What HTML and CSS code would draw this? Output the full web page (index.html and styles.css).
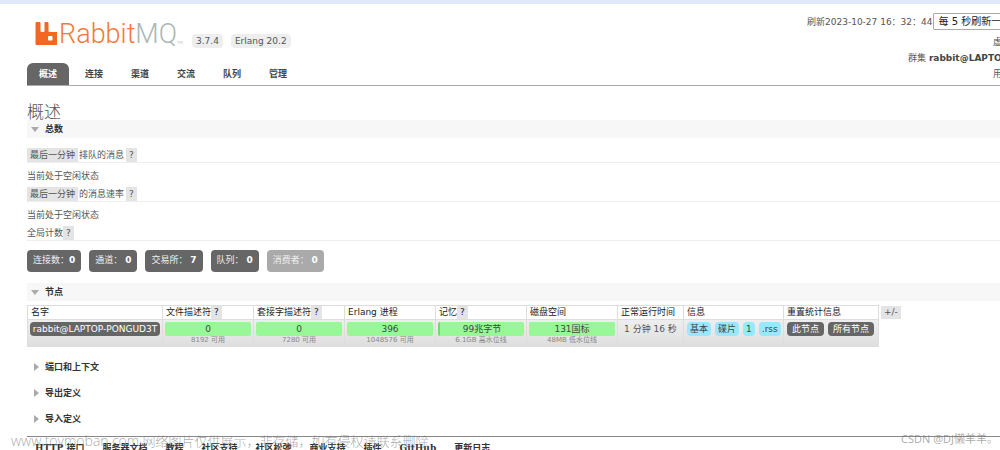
FILE: index.html
```html
<!DOCTYPE html>
<html lang="zh-CN">
<head>
<meta charset="utf-8">
<title>RabbitMQ Management</title>
<link rel="stylesheet" href="styles.css">
</head>
<body>
<header class="header">
  <div class="brand">
    <a class="logo" href="#" aria-label="RabbitMQ">
      <svg class="logo-mark" viewBox="0 0 21 23" aria-hidden="true"><path fill="#f26822" fill-rule="evenodd" d="M1 0h3q1 0 1 1v8q0 1 1 1h2q1 0 1-1V1q0-1 1-1h2q1 0 1 1v8q0 1 1 1h7q1 0 1 1v11q0 1-1 1H1q-1 0-1-1V1q0-1 1-1zM13.500 14q-1 0-1 1v2.500q0 1 1 1h2.500q1 0 1-1v-2.500q0-1-1-1z"/></svg>
      <span class="logo-text">Rabbit<span class="logo-mq">MQ</span></span><span class="logo-tm">TM</span>
    </a>
    <span class="version">3.7.4</span>
    <span class="version">Erlang 20.2</span>
  </div>
  <div class="status">
    <div class="status-row refresh"><label for="refresh">刷新2023-10-27 16：32：44</label><select id="refresh"><option>每 5 秒刷新一次</option></select></div>
    <div class="status-row vhost">虚拟主机</div>
    <div class="status-row cluster">群集 <b>rabbit@LAPTOP-PONGUD3T</b></div>
    <div class="status-row user">用户 guest</div>
  </div>
</header>
<nav class="tabs">
  <a class="tab active" href="#">概述</a><a class="tab" href="#">连接</a><a class="tab" href="#">渠道</a><a class="tab" href="#">交流</a><a class="tab" href="#">队列</a><a class="tab" href="#">管理</a>
</nav>
<main class="main">
  <h1>概述</h1>
  <h2 class="section open">总数</h2>
  <div class="totals">
    <h3><button class="range">最后一分钟</button>排队的消息<button class="help spaced">?</button></h3>
    <p>当前处于空闲状态</p>
    <h3><button class="range">最后一分钟</button>的消息速率<button class="help spaced">?</button></h3>
    <p>当前处于空闲状态</p>
    <h3>全局计数<button class="help">?</button></h3>
    <div class="counts">
      <a class="count" href="#">连接数：<b>0</b></a>
      <a class="count" href="#">通道： <b>0</b></a>
      <a class="count" href="#">交易所： <b>7</b></a>
      <a class="count" href="#">队列： <b>0</b></a>
      <span class="count disabled">消费者： <b>0</b></span>
    </div>
  </div>
  <h2 class="section open">节点</h2>
  <div class="nodes">
    <table>
      <colgroup><col class="c-name"><col class="c-stat"><col class="c-stat"><col class="c-stat"><col class="c-stat"><col class="c-stat"><col class="c-time"><col class="c-info"><col class="c-reset"></colgroup>
      <thead><tr>
        <th>名字</th><th>文件描述符<button class="help">?</button></th><th>套接字描述符<button class="help">?</button></th><th>Erlang 进程</th><th>记忆<button class="help">?</button></th><th>磁盘空间</th><th>正常运行时间</th><th>信息</th><th>重置统计信息</th>
      </tr></thead>
      <tbody><tr>
        <td><a class="pill node" href="#">rabbit@LAPTOP-PONGUD3T</a></td>
        <td><div class="bar">0</div><small>8192 可用</small></td>
        <td><div class="bar">0</div><small>7280 可用</small></td>
        <td><div class="bar">396</div><small>1048576 可用</small></td>
        <td><div class="bar used">99兆字节</div><small>6.1GB 高水位线</small></td>
        <td><div class="bar">131国标</div><small>48MB 低水位线</small></td>
        <td class="uptime">1 分钟 16 秒</td>
        <td><div class="group"><span class="pill info">基本</span><span class="pill info">碟片</span><span class="pill info">1</span><span class="pill info">.rss</span></div></td>
        <td><div class="group"><button class="pill">此节点</button><button class="pill">所有节点</button></div></td>
      </tr></tbody>
    </table>
    <button class="columns">+/-</button>
  </div>
  <div class="folded">
    <h2 class="section">端口和上下文</h2>
    <h2 class="section">导出定义</h2>
    <h2 class="section">导入定义</h2>
  </div>
</main>
<footer class="footer">
  <a href="#">HTTP 接口</a><a href="#">服务器文档</a><a href="#">教程</a><a href="#">社区支持</a><a href="#">社区松弛</a><a href="#">商业支持</a><a href="#">插件</a><a href="#">GitHub</a><a href="#">更新日志</a>
</footer>
<div class="watermark"><span class="site">www.toymoban.com</span> 网络图片仅供展示，非存储，如有侵权请联系删除</div>
<div class="credit">CSDN @DJ懒羊羊。</div>
</body>
</html>
```
FILE: styles.css
```css
* { box-sizing: border-box; }
body {
  position: relative;
  height: 100vh;
  margin: 0;
  overflow: hidden;
  border-top: 4px solid #dfe9f9;
  background: #fff;
  color: #555;
  font: 9px/12px "DejaVu Sans", "Noto Sans CJK SC", sans-serif;
}
button, select { margin: 0; border: 0; font: inherit; color: inherit; }
a { color: inherit; text-decoration: none; }

.header { display: flex; justify-content: space-between; height: 59px; padding-left: 35px; white-space: nowrap; }
.brand { display: flex; align-items: flex-start; }
.logo { display: flex; width: 157px; padding-top: 18px; }
.logo-mark { flex: none; width: 22px; height: 23px; }
.logo-text { margin-left: 2px; color: #f4793b; font: 27px/24px "Roboto", sans-serif; font-weight: 300; }
.logo-mq { color: #aab8b4; }
.logo-tm { align-self: flex-end; color: #ccc; font-size: 4px; line-height: 6px; }
.version { margin: 30px 8px 0 0; padding: 1px 4px; border-radius: 4px; background: #eee; color: #555; line-height: 12px; }

.status { flex: none; width: 193px; padding-top: 9px; }
.status-row { height: 16px; line-height: 16px; }
.refresh { display: flex; align-items: center; height: 17px; margin-bottom: 4px; }
.refresh select { flex: none; width: 110px; height: 17px; padding: 0 5px; border: 1px solid #aaa; border-radius: 1px; background: #fff; color: #222; font-size: 10px; appearance: none; }
.vhost, .user { padding-left: 186px; }
.cluster { padding-left: 101px; }
.cluster b { color: #444; }

.tabs { display: flex; gap: 4px; margin-left: 27px; border-bottom: 1px solid #aaa; }
.tab { padding: 5px 12px; border-radius: 6px 6px 0 0; color: #444; font-weight: bold; line-height: 12px; }
.tab.active { background: #666; color: #fff; }

.main { padding-left: 27px; }
h1, h2, h3, p { margin: 0; font-size: 9px; }
h1 { padding-top: 16px; color: #555; font: 300 17px/18px "Noto Sans CJK SC", sans-serif; }
.section { display: flex; align-items: center; height: 18px; padding-left: 4px; color: #333; font-weight: bold; }
.section::before { width: 0; height: 0; margin: 0 6px 0 3px; border: 4px solid transparent; border-left: 5px solid #aaa; border-right: 0; content: ""; }
.section.open { background: #f7f7f7; }
.section.open::before { margin: 0 6px 0 0; border: 4px solid transparent; border-top: 5px solid #aaa; border-bottom: 0; }

.totals { padding: 10px 0 11px; }
h3 { display: flex; height: 15px; border-bottom: 1px solid #eee; font-weight: normal; line-height: 14px; }
.range, .help, .columns { background: #e4e4e4; line-height: 13px; }
.range { padding: 0 3px; margin-right: 1px; }
.help { padding: 0 3px; }
h3 .range, h3 .help { line-height: 14px; }
.help.spaced { margin-left: 2px; }
p { padding: 7px 0 5px; line-height: 12px; }
.counts { display: flex; gap: 8px; margin-top: 9px; }
.count { padding: 4px 6px 5px; border-radius: 4px; background: #666; color: #eee; line-height: 13px; }
.count b { color: #fff; }
.count.disabled { background: #aaa; }

.nodes { display: flex; align-items: flex-start; gap: 2px; padding-top: 4px; }
table { flex: none; width: 852px; table-layout: fixed; border-collapse: collapse; white-space: nowrap; }
.c-name { width: 135px; }
.c-stat { width: 91px; }
.c-time { width: 66px; }
.c-info { width: 100px; }
th, td { border: 1px solid #ddd; }
th { padding: 0 3px; color: #222; font-weight: normal; line-height: 13px; text-align: left; }
td { padding: 2px 2px 1px; vertical-align: top; text-align: center; }
tbody { background: linear-gradient(#eee, #dedede); }
.pill { display: block; padding: 1px 5px; border-radius: 4px; background: #666; color: #fff; line-height: 12px; }
.group { display: flex; gap: 4px; padding-left: 1px; }
.info { padding: 1px 3px; background: #98e8ff; color: #444; }
.node { padding: 1px 2px; }
.bar { border-radius: 2px; background: #98f898; color: #444; line-height: 14px; }
.used { border-left: 2px solid #6edb6e; }
small { display: block; color: #888; font-size: 7px; line-height: 9px; }
.uptime { line-height: 14px; }
.columns { margin-top: 1px; padding: 0 3px; }

.folded { display: grid; gap: 8px; padding-top: 11px; }
.footer { display: flex; gap: 18px; margin: 8px 0 0 27px; padding: 4px 8px; border-top: 1px solid #888; color: #333; font-family: "DejaVu Serif", "Noto Sans CJK SC", serif; font-weight: bold; white-space: nowrap; line-height: 14px; }
.watermark, .credit { position: absolute; color: rgba(120, 120, 120, 0.65); font-family: "Open Sans", "Noto Sans CJK SC", sans-serif; white-space: nowrap; }
.watermark { bottom: 0; left: 11px; font-size: 13px; font-weight: 300; line-height: 18px; }
.site { font-size: 14px; }
.credit { right: 2px; bottom: 3px; font-size: 11px; line-height: 16px; }
```
